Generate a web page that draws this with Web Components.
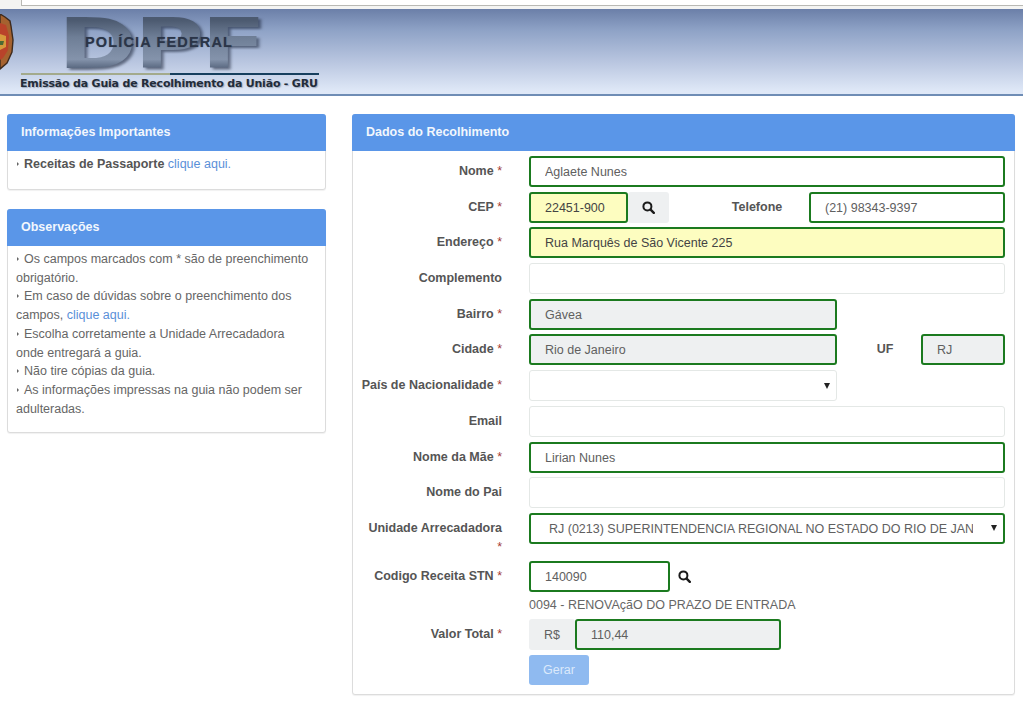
<!DOCTYPE html>
<html lang="pt-BR">
<head>
<meta charset="utf-8">
<title>Emissão da GRU</title>
<style>
  html, body { margin: 0; height: 100%; background: #fff; overflow: hidden; }
  body { font: 12.5px/18.7px "Liberation Sans", Arial, sans-serif; color: #666; }
  .page { display: grid; grid-template-columns: 319px 663px; column-gap: 26px; padding: 18px 8px 0 7px; align-items: start; }
  .side { display: flex; flex-direction: column; gap: 19px; }
  .side a { color: #5a8fd8; text-decoration: none; }
  .side b { color: #555; }
</style>
</head>
<body>

<gru-header></gru-header>

<div class="page">
  <div class="side">
    <gru-panel heading="Informações Importantes" style="--body-h:38px">
      <gru-bullet><b>Receitas de Passaporte</b> <a href="#">clique aqui.</a></gru-bullet>
    </gru-panel>
    <gru-panel heading="Observações">
      <gru-bullet>Os campos marcados com * são de preenchimento obrigatório.</gru-bullet>
      <gru-bullet>Em caso de dúvidas sobre o preenchimento dos campos, <a href="#">clique aqui.</a></gru-bullet>
      <gru-bullet>Escolha corretamente a Unidade Arrecadadora onde entregará a guia.</gru-bullet>
      <gru-bullet>Não tire cópias da guia.</gru-bullet>
      <gru-bullet>As informações impressas na guia não podem ser adulteradas.</gru-bullet>
    </gru-panel>
  </div>

  <gru-panel heading="Dados do Recolhimento" form>
    <gru-field label="Nome" req><gru-input ok>Aglaete Nunes</gru-input></gru-field>

    <gru-field label="CEP" req>
      <gru-input ok fill="auto" style="--w:99px">22451-900</gru-input>
      <gru-addon style="--w:41px"><gru-search></gru-search></gru-addon>
      <gru-inline-label style="--w:140px;--pad:36px">Telefone</gru-inline-label>
      <gru-input ok style="--w:196px">(21) 98343-9397</gru-input>
    </gru-field>

    <gru-field label="Endereço" req><gru-input ok fill="auto">Rua Marquês de São Vicente 225</gru-input></gru-field>
    <gru-field label="Complemento"><gru-input></gru-input></gru-field>
    <gru-field label="Bairro" req><gru-input ok fill="off" style="--w:308px">Gávea</gru-input></gru-field>

    <gru-field label="Cidade" req>
      <gru-input ok fill="off" style="--w:308px">Rio de Janeiro</gru-input>
      <gru-inline-label style="--w:84px;--pad:12px">UF</gru-inline-label>
      <gru-input ok fill="off" style="--w:84px">RJ</gru-input>
    </gru-field>

    <gru-field label="País de Nacionalidade" req nowrap><gru-input select style="--w:308px"></gru-input></gru-field>
    <gru-field label="Email"><gru-input></gru-input></gru-field>
    <gru-field label="Nome da Mãe" req><gru-input ok>Lirian Nunes</gru-input></gru-field>
    <gru-field label="Nome do Pai"><gru-input></gru-input></gru-field>
    <gru-field label="Unidade Arrecadadora" req><gru-input ok select>RJ (0213) SUPERINTENDENCIA REGIONAL NO ESTADO DO RIO DE JANEIRO</gru-input></gru-field>

    <gru-field label="Codigo Receita STN" req>
      <gru-input ok style="--w:141px">140090</gru-input>
      <gru-addon plain style="--w:30px"><gru-search></gru-search></gru-addon>
      <gru-note>0094 - RENOVAçãO DO PRAZO DE ENTRADA</gru-note>
    </gru-field>

    <gru-field label="Valor Total" req>
      <gru-addon style="--w:46px">R$</gru-addon>
      <gru-input ok fill="off" style="--w:206px">110,44</gru-input>
    </gru-field>

    <gru-field><gru-button>Gerar</gru-button></gru-field>
  </gru-panel>
</div>

<script>
function shadow(el, html) {
  el.attachShadow({ mode: 'open' }).innerHTML = html;
}

class GruHeader extends HTMLElement {
  connectedCallback() {
    shadow(this, `
      <style>
        :host { display: block; height: 96px; position: relative; overflow: hidden;
          background: linear-gradient(#6b7fa8 9px, #8ea2c6 30px, #b9c6e0 62px, #dfe8f7 91px);
          box-sizing: border-box; }
        .chrome { height: 9px; background: #f4f4f2; box-sizing: border-box; padding-left: 21px; }
        .chrome div { height: 5px; background: #fff; border: 1px solid #b9b9b4; border-top: 0; border-right: 0; }
        .rule { position: absolute; left: 0; right: 0; bottom: 0; height: 2px; background: #6f8db5; }
        .badge { position: absolute; left: 0; top: 14px; }
        .dpf { position: absolute; left: 58px; top: 9px; padding-right: 12px; font: bold 70px/70px "DejaVu Sans", sans-serif; letter-spacing: -2px;
          transform: scaleX(1.36); transform-origin: 0 0;
          background: linear-gradient(#4c5a70 16%, #6e7e96 40%, #8493ab 72%, #5b6a82 84%);
          -webkit-background-clip: text; background-clip: text; color: transparent;
          filter: drop-shadow(2px 2px 1px rgba(20,30,50,.55)); }
        .pf { position: absolute; left: 85px; top: 34px; font: bold 14.5px/16px "Liberation Sans", sans-serif; color: #2b3548; letter-spacing: 1.15px;
          text-shadow: 0 0 1px rgba(40,50,70,.5); white-space: nowrap; }
        .lines { position: absolute; left: 21px; top: 73px; width: 298px; height: 2px;
          background: linear-gradient(90deg, #a3aa8c 50%, #163f5e 50%); }
        .sub { position: absolute; left: 20px; top: 76px; font: bold 11px/16px "DejaVu Sans", sans-serif; color: #222c3a; letter-spacing: -.2px; white-space: nowrap;
          text-shadow: 1px 1px 1px rgba(60,70,90,.35); }
      </style>
      <div class="chrome"><div></div></div>
      <svg class="badge" width="14" height="56" viewBox="0 0 14 56">
        <path d="M0 0 L5 3 L10 7 L11 12 L13 26 L12 38 L7 49 L0 55 Z" fill="#a5622f" stroke="#3e2a1c" stroke-width="1.4"/>
        <path d="M0 9 L6 11 L9 22 L8 36 L3 44 L0 46 Z" fill="#b9432a"/>
        <path d="M0 20 L6 22 L6 33 L0 36 Z" fill="#d79a3c"/>
        <path d="M0 27 L4 27 L3 31 L0 31 Z" fill="#4b6a34"/>
      </svg>
      <div class="dpf">DPF</div>
      <div class="pf">POLÍCIA FEDERAL</div>
      <div class="lines"></div>
      <div class="sub">Emissão da Guia de Recolhimento da União - GRU</div>
      <div class="rule"></div>
    `);
  }
}

class GruPanel extends HTMLElement {
  connectedCallback() {
    const isForm = this.hasAttribute('form');
    shadow(this, `
      <style>
        :host { display: block; background: #fff; border: 1px solid #dcdcdc; border-radius: 3px;
          box-shadow: 0 1px 1px rgba(0,0,0,.06); box-sizing: border-box; }
        header { margin: -1px -1px 0; height: 37px; padding: 0 14px; background: #5a96e8; color: #f2f7fd; font-weight: bold;
          line-height: 37px; border-radius: 3px 3px 0 0; }
        .body { padding: ${isForm ? '5px 9px 8px 0' : '4px 14px 14px 8px'}; min-height: var(--body-h, 0);
          display: flex; flex-direction: column; ${isForm ? 'gap: 4.7px;' : ''} box-sizing: border-box; }
      </style>
      <header>${this.getAttribute('heading')}</header>
      <div class="body"><slot></slot></div>
    `);
  }
}

class GruBullet extends HTMLElement {
  connectedCallback() {
    shadow(this, `
      <style>
        :host { display: block; }
        i { display: inline-block; width: 0; height: 0; margin: 0 5px 2px 1px; vertical-align: baseline;
          border-left: 2px solid #666; border-top: 2px solid transparent; border-bottom: 2px solid transparent; }
      </style>
      <i></i><slot></slot>
    `);
  }
}

class GruField extends HTMLElement {
  connectedCallback() {
    const label = this.getAttribute('label') || '';
    const star = this.hasAttribute('req') ? ' <span>*</span>' : '';
    shadow(this, `
      <style>
        :host { display: grid; grid-template-columns: 140px 476px; column-gap: 27px; padding-left: 9px; }
        label { text-align: right; font-weight: bold; color: #555; padding-top: 6px; ${this.hasAttribute('nowrap') ? 'white-space: nowrap; direction: rtl;' : ''} }
        span { color: #a33b36; font-weight: normal; }
        .ctl { display: flex; flex-wrap: wrap; align-items: flex-start; min-height: 31px; }
      </style>
      <label><bdi>${label}${star}</bdi></label>
      <div class="ctl"><slot></slot></div>
    `);
  }
}

class GruInput extends HTMLElement {
  connectedCallback() {
    const ok = this.hasAttribute('ok');
    const fill = this.getAttribute('fill');
    const bg = fill === 'auto' ? '#fdfdc0' : fill === 'off' ? '#eef0f1' : '#fff';
    const isSelect = this.hasAttribute('select');
    shadow(this, `
      <style>
        :host { display: block; flex: 0 0 var(--w, 100%); width: var(--w, 100%); height: 31px; box-sizing: border-box;
          background: ${bg}; border: ${ok ? '2px solid #1b7a1f' : '1px solid #e4e8e6'}; border-radius: 3px;
          color: ${fill === 'auto' ? '#444' : '#606060'}; position: relative; overflow: hidden;
          padding: 0 ${isSelect ? '30px' : '12px'} 0 ${ok ? (isSelect ? '18px' : '14px') : '15px'};
          line-height: ${ok ? '28px' : '29px'}; white-space: nowrap; }
        .clip { display: block; overflow: hidden; }
        svg { position: absolute; right: 6px; top: 50%; margin-top: -3px; }
      </style>
      <span class="clip"><slot></slot></span>
      ${isSelect ? '<svg width="6" height="6" viewBox="0 0 6 6"><path d="M0 0h6L3 6z" fill="#222"/></svg>' : ''}
    `);
  }
}

class GruAddon extends HTMLElement {
  connectedCallback() {
    const plain = this.hasAttribute('plain');
    shadow(this, `
      <style>
        :host { display: flex; align-items: center; justify-content: center; flex: 0 0 var(--w); width: var(--w); height: 31px;
          background: ${plain ? 'transparent' : '#eef0f1'}; border-radius: 3px; color: #606060; box-sizing: border-box; }
      </style>
      <slot></slot>
    `);
  }
}

class GruSearch extends HTMLElement {
  connectedCallback() {
    shadow(this, `
      <style>:host { display: inline-flex; margin-left: -1px; }</style>
      <svg width="13" height="13" viewBox="0 0 13 13" fill="none" stroke="#1b1b1b">
        <circle cx="5.4" cy="5.4" r="4" stroke-width="2"/>
        <path d="M8.6 8.6 L11.8 11.8" stroke-width="2.4" stroke-linecap="round"/>
      </svg>
    `);
  }
}

class GruInlineLabel extends HTMLElement {
  connectedCallback() {
    shadow(this, `
      <style>
        :host { display: block; flex: 0 0 var(--w); width: var(--w); box-sizing: border-box; padding-left: var(--pad, 0); text-align: center;
          font-weight: bold; color: #555; line-height: 31px; }
      </style>
      <slot></slot>
    `);
  }
}

class GruNote extends HTMLElement {
  connectedCallback() {
    shadow(this, `
      <style>:host { display: block; flex: 0 0 100%; margin-top: 4px; color: #666; }</style>
      <slot></slot>
    `);
  }
}

class GruButton extends HTMLElement {
  connectedCallback() {
    shadow(this, `
      <style>
        :host { display: block; width: 60px; height: 30px; background: #8fbaf0; color: #dbe9fb; border-radius: 3px;
          text-align: center; line-height: 30px; }
      </style>
      <slot></slot>
    `);
  }
}

customElements.define('gru-header', GruHeader);
customElements.define('gru-panel', GruPanel);
customElements.define('gru-bullet', GruBullet);
customElements.define('gru-field', GruField);
customElements.define('gru-input', GruInput);
customElements.define('gru-addon', GruAddon);
customElements.define('gru-search', GruSearch);
customElements.define('gru-inline-label', GruInlineLabel);
customElements.define('gru-note', GruNote);
customElements.define('gru-button', GruButton);
</script>
</body>
</html>
